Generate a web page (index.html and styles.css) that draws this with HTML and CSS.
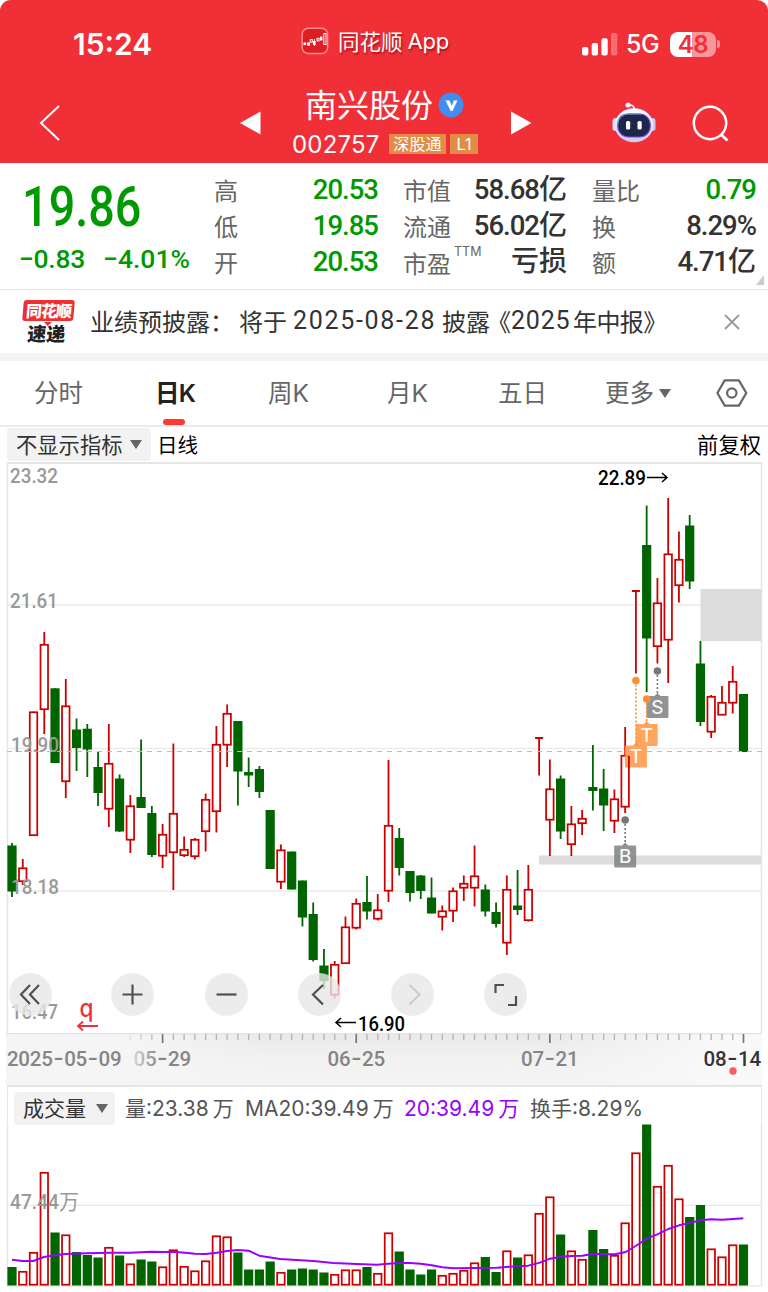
FILE: index.html
```html
<!DOCTYPE html>
<html lang="zh-CN">
<head>
<meta charset="utf-8">
<title>南兴股份 002757</title>
<link rel="stylesheet" href="styles.css">
</head>
<body>
<main class="app">
  <header class="header">
    <div class="status">
      <span class="clock">15:24</span>
      <span class="brand">
        <svg width="28" height="28" viewBox="0 0 28 28"><rect x="1.200" y="1.200" width="25.400" height="25.400" rx="6" fill="#df1d24" stroke="#ff8d90" stroke-width="1.500"/><g fill="#fff"><rect x="2.500" y="15.500" width="2.600" height="2.600"/><rect x="12" y="14" width="2.600" height="4"/><rect x="19" y="9.500" width="2.400" height="4"/><rect x="13" y="12" width=".8" height="7"/></g><g fill="none" stroke="#fff" stroke-width="1"><rect x="6.500" y="16" width="2" height="2.200"/><rect x="9.300" y="12.500" width="2" height="2.600"/><rect x="16" y="11.400" width="2" height="2.500"/><rect x="22.800" y="6.500" width="2.200" height="11"/></g></svg>
        <span class="brand-name">同花顺</span><span class="brand-app">App</span>
      </span>
      <span class="signals">
        <svg width="36" height="23" viewBox="0 0 36 23"><g fill="#fff"><rect x="0" y="14" width="6.300" height="8.500" rx="2"/><rect x="9.700" y="10" width="6.300" height="12.500" rx="2"/><rect x="19.400" y="5.300" width="6.300" height="17.200" rx="2"/><rect x="29" y="0" width="6.300" height="22.500" rx="2" opacity=".3"/></g></svg>
        <span class="net">5G</span>
        <span class="battery">48</span><i class="battery-tip"></i>
      </span>
    </div>
    <div class="nav">
      <svg class="back" width="22" height="36" viewBox="0 0 22 36"><path d="M20 1 2 18 20 35" fill="none" stroke="#fff" stroke-width="2"/></svg>
      <svg class="prev" width="21" height="24" viewBox="0 0 21 24"><path d="M0 12 20.500 .5v23z" fill="#fff"/></svg>
      <div class="title">
        <div class="name">南兴股份<svg width="26" height="26" viewBox="0 0 26 26"><circle cx="13" cy="13" r="12.500" fill="#438dee"/><path d="M7.500 8.500h4l2.300 5.600 2-5.600h3.600l-4.800 10.500h-1.900z" fill="#fff"/></svg></div>
        <div class="code"><span>002757</span><b class="tag tag-wide">深股通</b><b class="tag">L1</b></div>
      </div>
      <svg class="next" width="21" height="24" viewBox="0 0 21 24"><path d="M20.500 12 0 .5v23z" fill="#fff"/></svg>
      <svg class="robot" width="44" height="41" viewBox="0 0 44 41">
        <defs><linearGradient id="shell" x1="0" y1="0" x2="0" y2="1"><stop offset="0" stop-color="#fff"/><stop offset="1" stop-color="#c9cdf0"/></linearGradient></defs>
        <path d="M22.500 8Q22 2.500 17 3.200" fill="none" stroke="#dfe2f8" stroke-width="1.800"/><circle cx="16" cy="3" r="2.600" fill="#eceefd"/>
        <rect x=".5" y="16" width="6" height="13" rx="3" fill="#d9dcf8"/><rect x="37.500" y="16" width="6" height="13" rx="3" fill="#c5c9f2"/>
        <ellipse cx="22" cy="23.200" rx="19.300" ry="17" fill="url(#shell)"/>
        <rect x="5.800" y="12" width="32.500" height="23" rx="10.500" fill="#1d2748" stroke="#7d4bdc" stroke-width="1.100"/>
        <path d="M6 22Q6 12 17 12h12" fill="none" stroke="#4f9ab8" stroke-width="1.200"/>
        <rect x="14" y="19" width="4.200" height="8.600" rx="1.600" fill="#fff"/><rect x="25.500" y="19" width="4.200" height="8.600" rx="1.600" fill="#fff"/>
      </svg>
      <svg class="search" width="38" height="38" viewBox="0 0 38 38"><circle cx="18" cy="18" r="16.200" fill="none" stroke="#fff" stroke-width="2.500"/><path d="M29 29.500 35.500 35.500" stroke="#fff" stroke-width="2.800"/></svg>
    </div>
  </header>

  <section class="quote">
    <div class="last">
      <div class="price">19.86</div>
      <div class="change"><span>−0.83</span><span>−4.01%</span></div>
    </div>
    <dl class="col green"><dt>高</dt><dd>20.53</dd><dt>低</dt><dd>19.85</dd><dt>开</dt><dd>20.53</dd></dl>
    <dl class="col"><dt>市值</dt><dd>58.68<em>亿</em></dd><dt>流通</dt><dd>56.02<em>亿</em></dd><dt class="pe">市盈<sup>TTM</sup></dt><dd><em>亏损</em></dd></dl>
    <dl class="col"><dt>量比</dt><dd class="down">0.79</dd><dt>换</dt><dd>8.29%</dd><dt>额</dt><dd>4.71<em>亿</em></dd></dl>
    <i class="fold"></i>
  </section>

  <section class="news">
    <div class="logo"><span class="logo-top">同花顺</span><span class="logo-bottom">速递</span></div>
    <p class="headline"><span>业绩预披露：</span><span class="n1">将于</span><span class="date">2025-08-28</span><span class="n2">披露</span><span class="n3">《</span><span class="year">2025</span><span class="n4">年中报》</span></p>
    <svg class="close" width="16" height="16" viewBox="0 0 16 16"><path d="M1 1 15 15M15 1 1 15" stroke="#999" stroke-width="1.800"/></svg>
  </section>

  <nav class="tabs">
    <span class="t1">分时</span><span class="t2 active">日K</span><span class="t3">周K</span><span class="t4">月K</span><span class="t5">五日</span><span class="t6">更多<i class="caret"></i></span>
    <svg width="32" height="28" viewBox="0 0 32 28"><path d="M8.700 1.400h14.200L30.300 14l-7.400 12.600H8.700L1.400 14z" fill="none" stroke="#666" stroke-width="2.200" stroke-linejoin="round"/><circle cx="15.800" cy="14" r="4.700" fill="none" stroke="#666" stroke-width="2.200"/></svg>
  </nav>

  <div class="indicator"><span class="pill">不显示指标<i class="caret"></i></span><span class="period">日线</span><span class="adjust">前复权</span></div>

  <section class="kline">
    <svg id="kline" width="768" height="571" viewBox="0 462 768 571"></svg>
    <div class="controls">
      <i><svg viewBox="0 0 43 43"><path d="M21 12 12 21.500 21 31M30 12 21 21.500 30 31"/></svg></i>
      <i><svg viewBox="0 0 43 43"><path d="M11.500 21.500h20M21.500 11.500v20"/></svg></i>
      <i><svg viewBox="0 0 43 43"><path d="M11.500 21.500h20"/></svg></i>
      <i><svg viewBox="0 0 43 43"><path d="M25 12 15 21.500 25 31.500"/></svg></i>
      <i class="off"><svg viewBox="0 0 43 43"><path d="M18.500 12 28.500 21.500 18.500 31.500"/></svg></i>
      <i><svg viewBox="0 0 43 43"><path d="M11.500 20V12H20M24 32h8v-9"/></svg></i>
    </div>
  </section>
  <svg class="axis" id="axis" width="768" height="52" viewBox="0 1033 768 52"></svg>

  <section class="volume">
    <div class="volume-head"><span class="pill vol-pill">成交量<i class="caret"></i></span><span class="v1">量:23.38<u>万</u></span><span class="v2">MA20:39.49<u>万</u></span><span class="v3">20:39.49<u>万</u></span><span class="v4">换手:8.29%</span></div>
    <svg id="volume" width="768" height="168" viewBox="0 1124 768 168"></svg>
  </section>
</main>
<script src="chart.js"></script>
</body>
</html>
```
FILE: styles.css
```css
* { box-sizing: border-box; }
body { margin: 0; background: #fff; color: #333; font-family: Roboto, "Noto Sans CJK SC", sans-serif; }
.app { width: 768px; height: 1292px; overflow: hidden; display: flex; flex-direction: column; }
.app > * { flex: none; }
svg { display: block; }
i, em { font-style: normal; }
u { text-decoration: none; }

.header { height: 163px; background: #f12f37; border-radius: 11px 11px 0 0; color: #fff; }
.status { height: 86px; display: grid; grid-template-columns: 301px 281px 1fr; align-items: center; }
.clock { padding-left: 73px; font: 600 30px/40px Inter, sans-serif; padding-top: 2px; }
.brand { display: flex; align-items: center; height: 30px; margin-top: -5px; text-shadow: 1px 2px 2px rgba(100, 0, 0, .55); }
.brand-name { font: 21.500px/30px "Noto Sans CJK SC"; margin-left: 9px; }
.brand-app { font: 22px/30px Inter, sans-serif; margin-left: 5px; letter-spacing: -.2px; }
.signals { display: flex; align-items: center; padding-top: 2px; }
.net { font: 500 25px/30px Inter, sans-serif; margin-left: 8px; width: 35px; letter-spacing: -.5px; }
.battery { margin-left: 9px; width: 46px; height: 25px; border-radius: 8px; background: linear-gradient(90deg, #fff 48%, #f8979b 48%); color: #f12f37; font: 600 24px/25px Inter, sans-serif; text-align: center; letter-spacing: -.5px; }
.battery-tip { width: 3px; height: 8px; margin-left: 1px; border-radius: 0 3px 3px 0; background: #f8979b; }
.nav { height: 77px; display: flex; align-items: flex-start; }
.back { margin: 19px 0 0 39px; }
.prev { margin: 25px 0 0 179px; }
.title { width: 250px; height: 77px; }
.name { height: 38px; display: flex; align-items: center; margin-left: 44px; font: 32px/32px "Noto Sans CJK SC"; padding-bottom: 5px; }
.name svg { margin: 4px 0 0 5px; }
.code { display: flex; align-items: center; height: 40px; margin-left: 31px; font: 24px/40px Inter, sans-serif; letter-spacing: .2px; }
.code > span { width: 88px; white-space: nowrap; padding-top: 1px; }
.tag { height: 20px; margin: 0 0 0 4px; width: 28px; background: #e28d47; text-align: center; font: 16px/20px Inter, "Noto Sans CJK SC", sans-serif; white-space: nowrap; }
.tag-wide { width: 57px; margin-left: 9px; }
.next { margin-top: 25px; }
.robot { margin: 16px 0 0 80px; }
.search { margin: 19px 0 0 36px; }

.quote { position: relative; height: 127px; border-bottom: 1px solid #e8e8e8; display: flex; padding-top: 9px; }
.quote > * { flex: none; }
.last { width: 214px; color: #009900; font-weight: 500; }
.price { height: 70px; width: 214px; padding-left: 26px; font-size: 55px; line-height: 71px; transform: scaleX(.85); transform-origin: left; }
.change { display: flex; height: 34px; line-height: 34px; font-size: 26.500px; padding-left: 19px; letter-spacing: -.3px; }
.change span + span { margin-left: auto; padding-right: 24px; letter-spacing: 0; }
.col { margin: 0 25px 0 0; width: 164px; display: grid; grid-template-columns: auto 1fr; grid-auto-rows: 36px; line-height: 36px; }
.col dt { font: 24px/35px "Noto Sans CJK SC"; color: #666; white-space: nowrap; }
.col dd { margin: 0; text-align: right; font-size: 27.500px; font-weight: 500; letter-spacing: -1px; white-space: nowrap; line-height: 36px; }
.col em { font-family: "Noto Sans CJK SC"; font-size: 28px; font-weight: 500; line-height: 30px; letter-spacing: 0; }
.col.green dd, .col .down { color: #009900; }
.col .pe { line-height: 38px; position: relative; }
.pe sup { position: absolute; left: 51px; top: -2px; font: 12.500px/20px Inter, sans-serif; }
.fold { position: absolute; right: 4px; bottom: 4px; border: solid transparent; border-width: 5px 4px; border-right-color: #ccc; border-bottom-color: #ccc; }

.news { height: 63px; display: flex; align-items: center; }
.news > * { flex: none; }
.logo { width: 69px; padding-left: 22px; height: 44px; display: flex; flex-direction: column; transform: skewX(-5deg); }
.logo span { font: 900 16px/21px "Noto Sans CJK SC"; width: 51px; text-align: center; letter-spacing: -1px; }
.logo-top { position: relative; height: 22px; border-radius: 3px; background: #ee3030; color: #fff; }
.logo-top::after { content: ""; position: absolute; left: 22px; top: 22px; border: 4px solid transparent; border-top-color: #ee3030; border-bottom: 0; }
.logo .logo-bottom { font-size: 19px; line-height: 23px; color: #222; letter-spacing: 0; }
.headline { margin: -2px 0 0 21px; width: 634px; font: 24px/34px "Noto Sans CJK SC"; white-space: nowrap; display: flex; }
.headline .n1 { margin-left: 5px; }
.headline .date { margin-left: 6px; width: 143px; letter-spacing: 1.700px; font-family: Roboto; font-size: 25px; }
.headline .n2 { margin-left: 6px; }
.headline .n3 { margin-left: -3px; }
.headline .year { width: 60px; margin-left: 0; font-family: Roboto; font-size: 25px; letter-spacing: .8px; }
.headline .n4 { margin-left: 2px; letter-spacing: -.6px; }

.tabs { height: 74px; border-top: 8px solid #f4f4f4; border-bottom: 2px solid #ececec; display: flex; align-items: center; font: 24.500px/38px Inter, "Noto Sans CJK SC", sans-serif; color: #666; }
.tabs > span { position: relative; white-space: nowrap; }
.t1 { width: 121px; margin-left: 34px; }
.t2 { width: 113px; }
.t3 { width: 119px; }
.t4 { width: 111px; }
.t5 { width: 107px; }
.t6 { width: 111px; display: flex; align-items: center; }
.tabs .active { font-weight: 600; color: #222; letter-spacing: -.7px; }
.active::after { content: ""; position: absolute; left: 8px; top: 45px; width: 22px; height: 6px; border-radius: 3px; background: #ff3a30; }
.caret { display: block; border: 6px solid transparent; border-top: 9px solid #666; border-bottom: 0; }
.t6 .caret { margin-left: 5px; }

.indicator { height: 35px; display: flex; align-items: center; font: 20.500px/32px "Noto Sans CJK SC"; color: #000; padding: 0 7px 1px; }
.pill { height: 33px; display: flex; align-items: center; background: #f2f2f2; border-radius: 4px; color: #333; width: 144px; padding-left: 9px; font-size: 21.300px; }
.pill .caret { margin-left: 7px; }
.period { margin-left: 6px; }
.adjust { margin-left: auto; font-size: 21.300px; }

.kline { position: relative; height: 571px; }
.kline > svg { overflow: visible; }
.controls { position: absolute; left: 9px; top: 511px; display: flex; gap: 50.300px; }
.controls i { width: 43px; height: 43px; border-radius: 50%; background: rgba(231, 231, 231, .8); }
.controls i:first-child { margin-right: 9px; }
.controls path { fill: none; stroke: #505050; stroke-width: 2.200; }
.controls .off path { stroke: #ccc; }

.volume { height: 207px; }
.volume-head { height: 39px; margin: 0 6px 0 7px; border: solid #e6e6e6; border-width: 2px 1.500px 0; display: flex; align-items: center; font: 21px/33px Inter, "Noto Sans CJK SC", sans-serif; color: #555; padding: 5px 0 0 6px; white-space: nowrap; }
.vol-pill { width: 101px; height: 33px; margin-right: 10px; padding-left: 9px; font-size: 21px; }
.vol-pill .caret { margin-left: 10px; border-width: 9px 6px 0; }
.v1 { width: 120px; }
.v2 { width: 159px; }
.v3 { width: 126px; color: #9a00ff; }
.v1 u, .v2 u, .v3 u { margin-left: 4px; }

.din { font-family: Roboto, "Noto Sans CJK SC", sans-serif; }
.sans, .dash { font-family: Inter, sans-serif; }
```
FILE: chart.js
```js
const STEP = 10.757, FIRST = 12;
const RED = '#cc0000', GREEN = '#006400';
const cx = i => FIRST + i * STEP;

// [direction, body top, body bottom, high, low, volume top]
const bars = [
['g',845.5,891.5,843,897,1267],['r',867.5,882,859,885,1271],['r',711.5,836,711.5,836,1252],['r',644,710,632,734,1172],
['g',688.3,763,688.3,763,1232.5],['r',705.5,782,679,798,1234.5],['g',729.5,748,718.5,771,1252],['g',728.7,749.5,724,777,1255],
['g',767,793,751,806,1257.5],['r',763,809.5,724,827,1247],['g',778.5,831.5,774.5,832,1255.5],['r',805.5,840.5,795,853,1263.5],
['g',797,808,739.5,808,1259.5],['g',813,855,806,857,1261.5],['r',834,856.5,824,868,1266.5],['r',813,853,743.5,890,1249.5],
['r',849,856,836.5,857,1266],['r',839,857,838,859.5,1270.5],['r',799,832,793.5,851.5,1260.5],['r',744,812,726,832.5,1235.5],
['r',713,745.5,704.5,767,1236.5],['g',721,771.5,721,805.5,1252.5],['g',772,775.5,757.5,787,1269.5],['g',769,792,766,798,1269.5],
['g',810,869,810,869,1261.5],['r',849.5,882.5,844.5,889,1272],['g',851.5,889.5,851.5,889.5,1269.5],['g',880.5,917.5,880.5,926.5,1268.5],
['g',914,960,902.5,961.5,1269.5],['g',965.5,981,949,989,1272.5],['r',964,995.5,961,998.5,1274],['r',926.5,964,916.5,964,1269.5],
['r',903,928.5,898.5,929.5,1269.5],['g',902,911.5,876,919.5,1267],['r',909.5,919.5,894,920.5,1273],['r',825,891.5,760,902,1232.5],
['g',838,868,828,875.5,1251.5],['g',871,893,871,901.5,1269.5],['g',875.5,891,875,899,1274.5],['g',897.5,913.5,877.5,913.5,1269.5],
['r',910.5,917.5,905.5,930.5,1275],['r',890.5,911.5,887.5,922,1273],['r',883,888.5,875.5,901,1270],['r',875.5,888.5,845.5,906.5,1262.5],
['g',889.5,911.5,884.5,916.5,1257],['g',912,924,902.5,927.5,1272],['r',889,943.5,875.5,955,1250.5],['g',905.5,910,870,915,1257.5],
['r',889,921,865,921.5,1254.5],['t',738,738,738,775.5,1213],['r',788.5,820.5,759.5,856,1196.5],['g',778.5,831.5,775.5,839,1234.5],
['r',823.5,845,806,856,1250.5],['r',818,824,810,835,1259],['g',787,791,745,810.5,1230],['g',788.5,805.5,769,831,1249],
['r',798.5,821.5,789.5,833,1255],['r',755,807.5,727,813,1222.5],['t',591,591,591,673.5,1152.5],['g',545,638.5,505.5,692,1124.5],
['r',602.5,647,578,663.5,1186],['r',553.5,640.5,498,683,1165],['r',559,586,531.5,602.5,1198.5],['g',525.5,581.5,515,589,1217],
['g',663.5,722,641,726,1205],['r',696,732.5,695,738,1248.5],['r',702,715.5,686,715,1256.5],['r',681,703.5,666,713.5,1244.5],
['g',694,752,694,752,1244.5]];

const rect = (x, y, w, h, fill, extra = '') => `<rect x="${x}" y="${y}" width="${w}" height="${h}" fill="${fill}" ${extra}/>`;
const line = (x1, y1, x2, y2, stroke, w = 1, extra = '') => `<line x1="${x1}" y1="${y1}" x2="${x2}" y2="${y2}" stroke="${stroke}" stroke-width="${w}" ${extra}/>`;
const label = (s, x, y, len, size, fill, weight = 400, cls = 'din') =>
  `<text class="${cls}" x="${x}" y="${y}" textLength="${len}" lengthAdjust="spacingAndGlyphs" font-size="${size}" font-weight="${weight}" fill="${fill}">${s}</text>`;
const hollow = (x, top, bottom) => `<rect x="${x - 3.75}" y="${top + .8}" width="7.5" height="${Math.max(bottom - top - 1.6, 1)}" fill="#fff" stroke="${RED}" stroke-width="1.75"/>`;

let k = line(7, 463, 762, 463, '#e6e6e6', 2) + line(7.5, 462, 7.5, 1033, '#e6e6e6', 1.5) + line(761.5, 462, 761.5, 1033, '#e6e6e6', 1.5);
[605, 748.5, 891].forEach(y => k += line(8, y, 761, y, '#ebebeb', 1.3));
k += rect(700.5, 589, 61, 52, '#dcdcdc') + rect(539, 855.5, 222, 9, '#dcdcdc');
bars.forEach(([d, top, bottom, high, low], i) => {
  const x = cx(i), color = d === 'g' ? GREEN : RED;
  k += line(x, high, x, low, color, 1.8);
  if (d === 'g') k += rect(x - 4.6, top, 9.2, bottom - top, GREEN);
  else if (d === 't') k += line(x - 4, top, x + 4, top, RED, 2);
  else k += hollow(x, top, bottom);
});
k += line(7, 751.5, 762, 751.5, '#d9b78a', 1.1, 'stroke-dasharray="5 5"');
k += label('23.32', 10, 483, 48, 20, '#999', 500) + label('21.61', 10, 608, 48, 20, '#999', 500) + label('19.90', 11, 751.5, 48, 20, '#999', 500) + label('18.18', 11, 894, 48, 20, '#999', 500) + label('16.47', 11, 1019, 47, 20, '#999', 500);
k += label('22.89', 598, 485, 48, 20, '#000', 500) + label('16.90', 358, 1030.5, 47, 20, '#000', 500);
k += '<path d="M647 477.500h20m-5-4.500 5 4.500-5 4.500M356 1022.500h-20m5-4.500-5 4.500 5 4.500" fill="none" stroke="#000" stroke-width="1.500"/>';
k += label('q', 79.5, 1017, 14, 25, '#f12f37', 500, 'sans') + '<path d="M98 1026H78m5-4.500-5 4.500 5 4.500" fill="none" stroke="#f12f37" stroke-width="1.800"/>';

const flag = (x, dotY, top, letter, color, deep) => {
  const bx = x - 11;
  return line(x, dotY, x, top, deep, 1.6, 'stroke-dasharray="2 2"') + `<circle cx="${x}" cy="${dotY}" r="3.8" fill="${deep}"/>` +
    `<path d="M${bx + 1} ${top}h7l3-3 3 3h7q1 0 1 1v20q0 1-1 1h-20q-1 0-1-1v-20q0-1 1-1z" fill="${color}" fill-opacity=".88"/>` +
    `<text class="sans" x="${x}" y="${top + 17.8}" text-anchor="middle" font-size="19" font-weight="500" fill="#fff" fill-opacity=".92">${letter}</text>`;
};
k += flag(cx(60), 671, 696, 'S', '#848484', '#777');
k += flag(cx(58), 680.5, 745.5, 'T', '#ff9947', '#ff8f35');
k += flag(cx(59), 699, 724, 'T', '#ff9947', '#ff8f35');
k += flag(cx(57), 820, 845.5, 'B', '#848484', '#777');
// The candle beside the lower flag stays readable above its corner.
k += line(cx(57) + 3.75, 756, cx(57) + 3.75, 768, RED, 1.75);
document.getElementById('kline').innerHTML = k;

let a = `<defs><linearGradient id="base" x1="0" x2="0" y1="0" y2="1"><stop offset="0" stop-color="#e9e9e9"/><stop offset=".55" stop-color="#f2f2f2"/><stop offset="1" stop-color="#f4f4f4"/></linearGradient>
<linearGradient id="fade" x1="0" x2="1"><stop offset="0" stop-color="#f5f5f5"/><stop offset=".16" stop-color="#f5f5f5"/><stop offset=".35" stop-color="#f5f5f5" stop-opacity="0"/><stop offset=".72" stop-color="#f7f7f7" stop-opacity="0"/><stop offset=".95" stop-color="#f9f9f9"/></linearGradient>
<linearGradient id="ink" x1="0" x2="1"><stop offset="0" stop-color="#d5d5d5"/><stop offset=".45" stop-color="#858585"/></linearGradient></defs>`;
a += rect(6, 1033, 756, 52, 'url(#base)') + rect(6, 1033, 756, 52, 'url(#fade)') + line(6, 1033.5, 762, 1033.5, '#e2e2e2', 1.5);
for (let i = 11; i < 69; i++) {
  const big = [14, 32, 50, 68].includes(i);
  a += line(cx(i), 1034, cx(i), big ? 1043 : 1040, big ? '#777' : '#b3b3b3', big ? 1.7 : 1.3, i < 14 ? `opacity="${.25 * (i - 10)}"` : '');
}
// Tabular dates: every character is centred in a cell of equal width.
const dateLabel = (s, x, fill, step) =>
  `<text class="din" y="1065.5" text-anchor="middle" font-size="20.5" font-weight="500" fill="${fill}">` +
  [...s].map((c, i) => `<tspan x="${x + step * (i + .5)}"${c === '-' ? ' class="dash" font-size="23"' : ''}>${c}</tspan>`).join('') + '</text>';
a += dateLabel('2025-05-09', 7, '#858585', 11.45) + dateLabel('05-29', 133.5, 'url(#ink)', 11.5) + dateLabel('06-25', 327.5, '#858585', 11.5) + dateLabel('07-21', 521, '#858585', 11.5) + dateLabel('08-14', 703.5, '#333', 11.5);
a += '<circle cx="733" cy="1071" r="3.700" fill="#fa5c62"/>';
document.getElementById('axis').innerHTML = a;

let v = line(7.5, 1124, 7.5, 1286, '#e6e6e6', 1.5) + line(761.5, 1124, 761.5, 1286, '#e6e6e6', 1.5) + line(7, 1286, 762, 1286, '#e9e9e9', 1.5) + line(8, 1205.3, 761, 1205.3, '#ebebeb', 1.3);
bars.forEach((b, i) => v += b[0] === 'g' ? rect(cx(i) - 4.6, b[5], 9.2, 1285.5 - b[5], GREEN) : hollow(cx(i), b[5], 1285.5));
v += label('47.44<tspan font-size="21" font-weight="400">万</tspan>', 10, 1208.5, 69, 20, '#999', 500);
const left = [[36,419],[68,423],[100,423],[132,411],[165,406],[197,402],[260,400],[325,398],[390,398],[455,395],[490,396],[520,395],[555,398],[585,401],[617,402],[650,398],[681,393],[713,390],[746,392],[778,407],[840,417],[940,423],[1000,429],[1070,432],[1130,434]];
const right = [[25,431],[57,429],[90,429],[122,431],[155,436],[187,442],[220,445],[285,444],[350,443],[410,439],[445,437],[480,428],[510,416],[543,410],[575,408],[607,407],[639,401],[671,403],[705,403],[737,396],[768,377],[800,356],[832,343],[865,327],[897,316],[929,309],[961,301],[993,298],[1026,299],[1060,297],[1090,295]];
const points = [...left.map(([x, y]) => [x / 3, 1120 + y / 3]), ...right.map(([x, y]) => [380 + x / 3, 1120 + y / 3])];
v += `<polyline points="${points.map(p => p.map(n => n.toFixed(1)).join()).join(' ')}" fill="none" stroke="#9a00ff" stroke-width="1.900" stroke-linejoin="round"/>`;
document.getElementById('volume').innerHTML = v;
```
